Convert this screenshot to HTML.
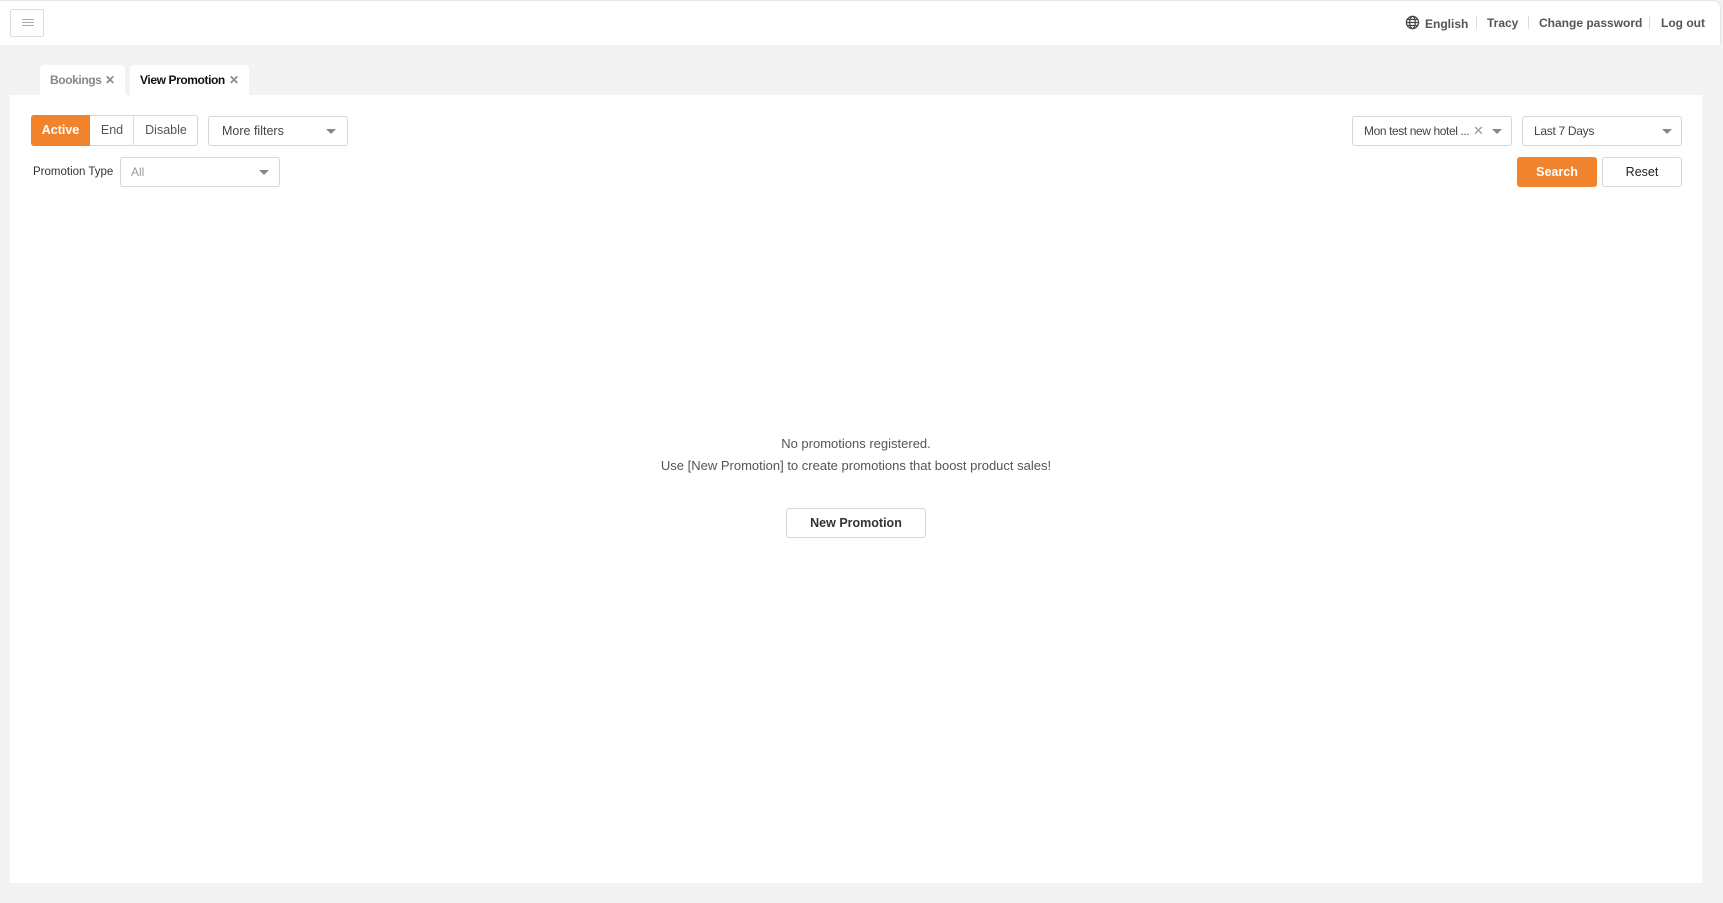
<!DOCTYPE html>
<html><head><meta charset="utf-8"><style>
*{box-sizing:border-box;margin:0;padding:0}
body{width:1723px;height:903px;background:#f3f3f3;font-family:"Liberation Sans",sans-serif;position:relative;overflow:hidden;color:#333}
.a{position:absolute}
.hdr{left:0;top:0;width:1721px;height:45px;background:#fff;border-top:1px solid #e6e6e6;border-right:1px solid #e6e6e6;border-radius:0 8px 0 0}
.burger{left:10px;top:9px;width:34px;height:28px;border:1px solid #ddd;border-radius:2px}
.burger i{position:absolute;left:11px;width:12px;height:1px;background:#aaa}
.nav{top:16px;font-size:12px;color:#555;font-weight:bold}
.sep{top:16px;width:1px;height:13px;background:#ddd}
.tab{top:65px;height:30px;background:#fff;border-radius:4px 4px 0 0;font-size:12px;line-height:30px;padding-left:10px;font-weight:bold;letter-spacing:-0.4px}
.tab b{position:absolute;color:#888;font-size:12px}
.panel{left:10px;top:95px;width:1692px;height:788px;background:#fff}
.box{border:1px solid #d6d6d6;border-radius:3px;background:#fff;font-size:12px;line-height:28px;color:#444}
.caret{position:absolute;top:12px;width:0;height:0;border-left:5px solid transparent;border-right:5px solid transparent;border-top:5px solid #888}
.btn{text-align:center;font-size:12.5px;border-radius:3px}
</style></head><body>
<div class="a hdr"></div>
<div class="a burger"><i style="top:9px"></i><i style="top:12px"></i><i style="top:15px"></i></div>
<svg class="a" style="left:1405px;top:15px" width="15" height="15" viewBox="0 0 16 16" fill="none" stroke="#444" stroke-width="1.3"><circle cx="8" cy="8" r="6.5"/><ellipse cx="8" cy="8" rx="3" ry="6.5"/><path d="M1.5 8h13M2.5 4.8h11M2.5 11.2h11"/></svg>
<div class="a nav" style="left:1425px;top:17px">English</div>
<div class="a sep" style="left:1476px"></div>
<div class="a nav" style="left:1487px">Tracy</div>
<div class="a sep" style="left:1528px"></div>
<div class="a nav" style="left:1539px">Change password</div>
<div class="a sep" style="left:1649px"></div>
<div class="a nav" style="left:1661px">Log out</div>
<div class="a tab" style="left:40px;width:85px;color:#888">Bookings<b style="left:65px">✕</b></div>
<div class="a tab" style="left:130px;width:119px;color:#111">View Promotion<b style="left:99px">✕</b></div>
<div class="a panel"></div>
<div class="a box" style="left:31px;top:115px;width:167px;height:31px"></div>
<div class="a btn" style="left:31px;top:115px;width:59px;height:31px;line-height:31px;background:#f0832c;color:#fff;font-weight:bold;border-radius:3px 0 0 3px">Active</div>
<div class="a btn" style="left:90px;top:115px;width:44px;line-height:31px;color:#555">End</div>
<div class="a" style="left:133px;top:116px;width:1px;height:29px;background:#ddd"></div>
<div class="a btn" style="left:134px;top:115px;width:64px;line-height:31px;color:#555">Disable</div>
<div class="a box" style="left:208px;top:116px;width:140px;height:30px;padding-left:13px;font-size:12.5px">More filters<span class="caret" style="left:117px"></span></div>
<div class="a" style="left:33px;top:166px;font-size:11.5px;color:#333">Promotion Type</div>
<div class="a box" style="left:120px;top:157px;width:160px;height:30px;padding-left:10px;color:#999">All<span class="caret" style="left:138px"></span></div>
<div class="a box" style="left:1352px;top:116px;width:160px;height:30px;padding-left:11px;letter-spacing:-0.4px">Mon test new hotel ...<span class="a" style="left:120px;top:0;color:#999;font-size:13px">✕</span><span class="caret" style="left:139px"></span></div>
<div class="a box" style="left:1522px;top:116px;width:160px;height:30px;padding-left:11px;letter-spacing:-0.3px">Last 7 Days<span class="caret" style="left:139px"></span></div>
<div class="a btn" style="left:1517px;top:157px;width:80px;height:30px;line-height:30px;background:#f0832c;color:#fff;font-weight:bold">Search</div>
<div class="a btn box" style="left:1602px;top:157px;width:80px;height:30px;line-height:28px;color:#222">Reset</div>
<div class="a" style="left:0;width:1712px;top:433px;text-align:center;font-size:13px;color:#555;line-height:22px">No promotions registered.<br>Use [New Promotion] to create promotions that boost product sales!</div>
<div class="a btn box" style="left:786px;top:508px;width:140px;height:30px;line-height:28px;font-weight:bold;color:#333;font-size:12.5px">New Promotion</div>
</body></html>
